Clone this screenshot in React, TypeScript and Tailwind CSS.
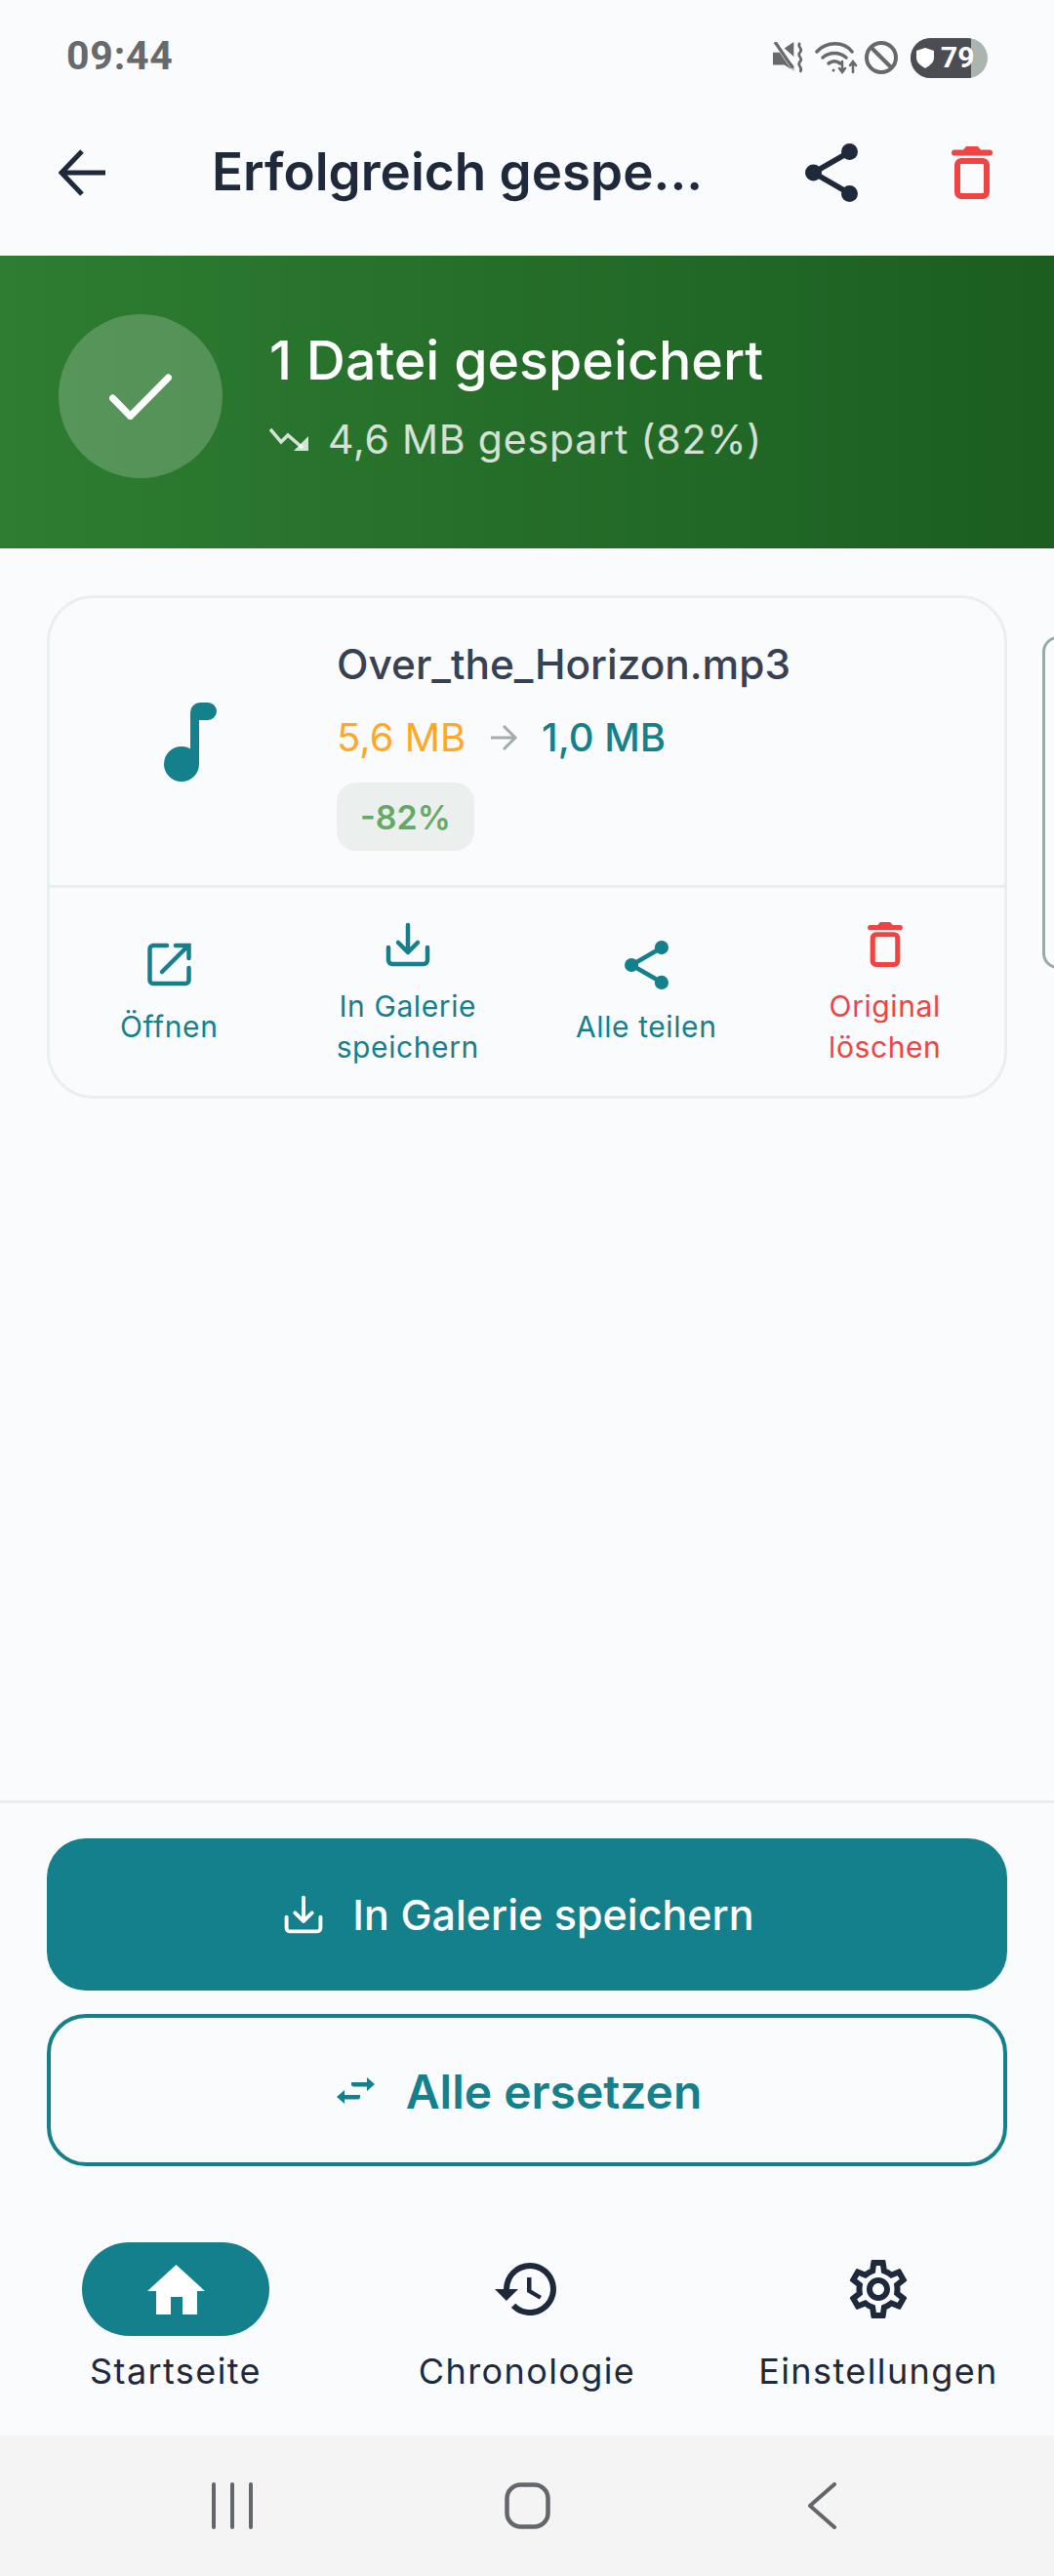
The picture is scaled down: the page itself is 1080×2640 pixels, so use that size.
import type { ReactNode } from "react";

const TEAL = "#14808c";

function TrashIcon({ className }: { className?: string }) {
  return (
    <svg viewBox="0 0 42 54" className={className} fill="none" stroke="currentColor">
      <path d="M15 0h12l3 3.500h9a3 3 0 0 1 0 6H3a3 3 0 0 1 0-6h9z" fill="currentColor" stroke="none" />
      <rect x="6" y="15" width="30" height="36" rx="4" strokeWidth="6" />
    </svg>
  );
}

function ShareIcon({ className }: { className?: string }) {
  return (
    <svg viewBox="0 0 54 60" className={className} fill="currentColor" stroke="currentColor">
      <path d="M45 9 8.500 30 45 51" fill="none" strokeWidth="5.500" />
      <circle cx="45.500" cy="8.500" r="8.500" stroke="none" />
      <circle cx="8.500" cy="30" r="8.500" stroke="none" />
      <circle cx="45.500" cy="51.500" r="8.500" stroke="none" />
    </svg>
  );
}

function SaveIcon({ className }: { className?: string }) {
  return (
    <svg viewBox="0 0 46 46" className={className} fill="none" stroke="currentColor" strokeWidth="4.500" strokeLinecap="round" strokeLinejoin="round">
      <path d="M23 3v28M13 21l10 10 10-10" />
      <path d="M3 26v13a4 4 0 0 0 4 4h32a4 4 0 0 0 4-4V26" />
    </svg>
  );
}

function OpenIcon({ className }: { className?: string }) {
  return (
    <svg viewBox="0 0 45 45" className={className} fill="none" stroke="currentColor" strokeWidth="4.500" strokeLinecap="round">
      <path d="M20 3H6a3.500 3.500 0 0 0-3.500 3.500v32A3.500 3.500 0 0 0 6 42h33a3.500 3.500 0 0 0 3.500-3.500V26" />
      <path d="M15 30 41 4M29 3h13.500v13" />
    </svg>
  );
}

function NavIcon({ name }: { name: string }) {
  if (name === "home") {
    return (
      <svg viewBox="0 0 59 51" className="h-[51px] w-[59px]" fill="white">
        <path d="M29.500 0 59 27H51V51H36V33H24V51H9V27H0z" />
      </svg>
    );
  }
  if (name === "history") {
    return (
      <svg viewBox="0 0 24 24" className="h-[72px] w-[72px]" fill="#1e293b">
        <path d="M13 3a9 9 0 0 0-9 9H1l3.890 3.890.07.14L9 12H6a7 7 0 1 1 2.050 4.950l-1.420 1.420A9 9 0 1 0 13 3zm-1 5v5l4.280 2.540.72-1.210-3.500-2.080V8z" />
      </svg>
    );
  }
  return (
    <svg viewBox="0 0 24 24" className="h-[72px] w-[72px]" fill="#1e293b">
      <path d="M19.43 12.98c.04-.32.07-.64.07-.98 0-.34-.03-.66-.07-.98l2.11-1.65c.19-.15.24-.42.12-.64l-2-3.46a.5.5 0 0 0-.61-.22l-2.49 1c-.52-.4-1.08-.73-1.69-.98l-.38-2.65A.49.49 0 0 0 14 2h-4c-.25 0-.46.18-.49.42l-.38 2.65c-.61.25-1.17.59-1.69.98l-2.49-1a.57.57 0 0 0-.18-.03c-.17 0-.34.09-.43.25l-2 3.46c-.13.22-.07.49.12.64l2.11 1.65c-.04.32-.07.65-.07.98 0 .33.03.66.07.98l-2.11 1.65c-.19.15-.24.42-.12.64l2 3.46a.5.5 0 0 0 .61.22l2.49-1c.52.4 1.08.73 1.69.98l.38 2.65c.03.24.24.42.49.42h4c.25 0 .46-.18.49-.42l.38-2.65c.61-.25 1.17-.59 1.69-.98l2.49 1c.06.02.12.03.18.03.17 0 .34-.09.43-.25l2-3.46c.12-.22.07-.49-.12-.64zm-1.98-1.71c.04.31.05.52.05.73 0 .21-.02.43-.05.73l-.14 1.13.89.7 1.08.84-.7 1.21-1.27-.51-1.04-.42-.9.68c-.43.32-.84.56-1.25.73l-1.06.43-.16 1.13-.2 1.35h-1.4l-.19-1.35-.16-1.13-1.06-.43c-.43-.18-.83-.41-1.23-.71l-.91-.7-1.06.43-1.27.51-.7-1.21 1.08-.84.89-.7-.14-1.13c-.03-.31-.05-.54-.05-.74s.02-.43.05-.73l.14-1.13-.89-.7-1.08-.84.7-1.21 1.27.51 1.04.42.9-.68c.43-.32.84-.56 1.25-.73l1.06-.43.16-1.13.2-1.35h1.39l.19 1.35.16 1.13 1.06.43c.43.18.83.41 1.23.71l.91.7 1.06-.43 1.27-.51.7 1.21-1.07.85-.89.7.14 1.13zM12 8c-2.21 0-4 1.79-4 4s1.790 4 4 4 4-1.790 4-4-1.790-4-4-4zm0 6c-1.100 0-2-.9-2-2s.9-2 2-2 2 .9 2 2-.9 2-2 2z" />
    </svg>
  );
}

function CardAction({ icon, label, red }: { icon: ReactNode; label: ReactNode; red?: boolean }) {
  return (
    <div className={`flex flex-col items-center justify-center gap-[17px] pt-[3px] ${red ? "text-[#ef4444]" : "text-[#14808c]"}`}>
      <div className="flex h-[50px] items-center justify-center">{icon}</div>
      <div className="text-center text-[30px] leading-[42px] tracking-[0.6px]">{label}</div>
    </div>
  );
}

function StatusIcons() {
  return (
    <div className="flex items-center pt-[3px]">
      <svg viewBox="0 0 30 30" className="h-[32px] w-[32px]" fill="#666a6d">
        <path d="M0 10h6l2-1 12 14v5l-9-6H0zM11 6l9-6v14z" />
        <path d="M1 1 19 27" stroke="#fafbfd" strokeWidth="1.500" />
        <path d="M2 0 19 25" stroke="#666a6d" strokeWidth="3" />
        <path d="M26 1c-4 4 4 5 0 9s4 5 0 9 4 5 0 10" fill="none" stroke="#666a6d" strokeWidth="2.500" />
      </svg>
      <svg viewBox="0 0 44 34" className="ml-[11px] h-[34px] w-[44px]" fill="none" stroke="#666a6d" strokeWidth="3.500" strokeLinecap="round">
        <path d="M2 11c10-11 28-11 36 0" />
        <path d="M8 17c7-6 17-6 24 0" />
        <path d="M14 23c4-3 8-3 12 0" />
        <circle cx="19" cy="30" r="1.500" fill="#666a6d" stroke="none" />
        <path d="M28 21v11M25 28l3 4 3-4" strokeWidth="2.500" />
        <path d="M39 32V21M36 25l3-4 3 4" strokeWidth="2.500" />
      </svg>
      <svg viewBox="0 0 34 34" className="ml-[7px] h-[34px] w-[34px]" fill="none" stroke="#666a6d" strokeWidth="4">
        <circle cx="17" cy="17" r="15" />
        <path d="M6.500 6.500l21 21" />
      </svg>
      <div className="relative ml-[13px] flex h-[41px] w-[79px] items-center overflow-hidden rounded-full bg-[#a9b5ae] pl-[6px]">
        <div className="absolute inset-y-0 left-0 w-[62px] bg-[#4c4d52]" />
        <svg viewBox="0 0 18 21" className="relative h-[21px] w-[18px]" fill="white">
          <path d="M9 0l9 3v7c0 5-4 8-9 11C4 18 0 15 0 10V3z" />
        </svg>
        <span className="relative ml-[7px] font-['Roboto',sans-serif] text-[30px] leading-none font-bold text-white">79</span>
      </div>
    </div>
  );
}

export default function App() {
  return (
    <div className="flex h-[2640px] w-[1080px] flex-col overflow-hidden bg-[#fafbfd] font-['Inter',sans-serif]">
      <div className="flex h-[115px] items-center justify-between px-[68px]">
        <span className="font-['Roboto',sans-serif] text-[41px] font-bold tracking-[0.8px] text-[#666a6d]">09:44</span>
        <StatusIcons />
      </div>

      <div className="flex h-[147px] items-center pb-[24px] pl-[60px] text-[#1e293b]">
        <svg viewBox="0 0 48 48" className="h-[48px] w-[48px]" fill="none" stroke="currentColor" strokeWidth="5">
          <path d="M48 24H4M24 2 3 24l21 22" />
        </svg>
        <div className="ml-[109px] w-[503px] text-[53px] leading-none font-semibold whitespace-nowrap">Erfolgreich gespe...</div>
        <ShareIcon className="ml-[105px] h-[60px] w-[54px]" />
        <TrashIcon className="ml-[96px] h-[54px] w-[42px] text-[#ef4444]" />
      </div>

      <div className="flex h-[300px] items-center bg-gradient-to-r from-[#2e7d32] to-[#1b5e20] pb-[12px] pl-[60px]">
        <div className="flex h-[168px] w-[168px] items-center justify-center rounded-full bg-white/20">
          <svg viewBox="0 0 64 47" className="h-[47px] w-[64px]" fill="none" stroke="white" strokeWidth="7" strokeLinecap="round">
            <path d="M3.500 25l18 18.500L60.500 4" />
          </svg>
        </div>
        <div className="ml-[48px] flex flex-col">
          <div className="text-[55.500px] leading-[60px] font-medium text-white">1 Datei gespeichert</div>
          <div className="mt-[27px] flex items-center text-[41px] leading-[48px] tracking-[0.8px] text-white/80">
            <svg viewBox="0 0 40 24" className="mr-[20px] h-[24px] w-[40px]" fill="none" stroke="currentColor" strokeWidth="3.500">
              <path d="M1 2l11 13 7-7 15 13" />
              <path d="M40 9v15H25z" fill="currentColor" stroke="none" />
            </svg>
            <span>4,6 MB gespart (82%)</span>
          </div>
        </div>
      </div>

      <div className="flex flex-1 items-start overflow-hidden pt-[48px] pl-[48px]">
        <div className="h-[516px] w-[984px] shrink-0 rounded-[48px] border-[3px] border-[#e9efef]">
          <div className="flex h-[297px] border-b-[3px] border-[#e9efef]">
            <div className="flex w-[294px] items-center justify-center pr-[6px]">
              <svg viewBox="0 0 54 81" className="h-[81px] w-[54px]" fill={TEAL}>
                <circle cx="18" cy="63" r="18" />
                <path d="M27 10a10 10 0 0 1 10-10h8a9 9 0 0 1 0 18h-9v45h-9z" />
              </svg>
            </div>
            <div className="flex flex-col pt-[43px]">
              <div className="text-[42.400px] leading-[50px] font-medium text-[#374151]">Over_the_Horizon.mp3</div>
              <div className="mt-[26px] flex items-center text-[40px] leading-[48px]">
                <span className="text-[#ffa726]">5,6 MB</span>
                <svg viewBox="0 0 30 30" className="mx-[24px] h-[30px] w-[30px]" fill="none" stroke="#a3aeaa" strokeWidth="3">
                  <path d="M2 15h25M15 3l12 12-12 12" />
                </svg>
                <span className="font-medium text-[#14808c]">1,0 MB</span>
              </div>
              <div className="mt-[22px] flex h-[70px] w-[141px] items-center justify-center rounded-[20px] bg-[#ebf0ef] text-[34px] font-semibold text-[#66a866]">
                -82%
              </div>
            </div>
          </div>
          <div className="grid h-[213px] grid-cols-4">
            <CardAction icon={<OpenIcon className="h-[45px] w-[45px]" />} label="Öffnen" />
            <CardAction
              icon={<SaveIcon className="h-[46px] w-[46px]" />}
              label={
                <>
                  In Galerie
                  <br />
                  speichern
                </>
              }
            />
            <CardAction icon={<ShareIcon className="h-[50px] w-[45px]" />} label="Alle teilen" />
            <CardAction
              red
              icon={<TrashIcon className="h-[46px] w-[36px]" />}
              label={
                <>
                  Original
                  <br />
                  löschen
                </>
              }
            />
          </div>
        </div>
        <div className="mt-[42px] ml-[36px] h-[341px] w-[40px] shrink-0 rounded-[16px] border-[3px] border-[#9aaaa5]" />
      </div>

      <div className="flex flex-col gap-[24px] border-t-[3px] border-[#e9efef] px-[48px] pt-[36px]">
        <div className="flex h-[156px] items-center justify-center gap-[30px] rounded-[40px] bg-[#14808c] pr-[16px] text-[43px] font-medium text-white">
          <SaveIcon className="h-[40px] w-[40px]" />
          <span>In Galerie speichern</span>
        </div>
        <div className="flex h-[156px] items-center justify-center gap-[32px] rounded-[40px] border-4 border-[#14808c] pr-[16px] text-[48px] font-semibold text-[#14808c]">
          <svg viewBox="0 0 39 27" className="h-[27px] w-[39px]" fill="currentColor">
            <path d="M15 5h16V0l8 7-8 7V9.500H17a2.200 2.200 0 0 1-2-2.200z" />
            <path d="M24 18H8v-5l-8 7 8 7v-4.500h14a2.200 2.200 0 0 0 2-2.300z" />
          </svg>
          <span className="pt-[3px]">Alle ersetzen</span>
        </div>
      </div>

      <div className="grid h-[276px] grid-cols-3 pt-[78px]">
        <div className="flex flex-col items-center">
          <div className="flex h-[96px] w-[192px] items-center justify-center rounded-full bg-[#14808c]">
            <NavIcon name="home" />
          </div>
          <div className="mt-[14px] text-[36px] leading-[44px] tracking-[1.4px] text-[#1e293b]">Startseite</div>
        </div>
        <div className="flex flex-col items-center">
          <div className="flex h-[96px] w-[192px] items-center justify-center">
            <NavIcon name="history" />
          </div>
          <div className="mt-[14px] text-[36px] leading-[44px] tracking-[1.4px] text-[#1e293b]">Chronologie</div>
        </div>
        <div className="flex flex-col items-center">
          <div className="flex h-[96px] w-[192px] items-center justify-center">
            <NavIcon name="settings" />
          </div>
          <div className="mt-[14px] text-[36px] leading-[44px] tracking-[1.4px] text-[#1e293b]">Einstellungen</div>
        </div>
      </div>

      <div className="grid h-[144px] grid-cols-3 items-center justify-items-center bg-[#f4f4f4] px-[87px]">
        <svg viewBox="0 0 44 48" className="h-[48px] w-[44px]" stroke="#63666a" strokeWidth="4" strokeLinecap="round">
          <path d="M3 2v44M22 2v44M41 2v44" />
        </svg>
        <svg viewBox="0 0 47 48" className="h-[48px] w-[47px]" fill="none" stroke="#63666a" strokeWidth="4.500">
          <rect x="2.500" y="2.500" width="42" height="43" rx="14" />
        </svg>
        <svg viewBox="0 0 29 48" className="h-[48px] w-[29px]" fill="none" stroke="#63666a" strokeWidth="4" strokeLinecap="round" strokeLinejoin="round">
          <path d="M27 2 2 24l25 22" />
        </svg>
      </div>
    </div>
  );
}
